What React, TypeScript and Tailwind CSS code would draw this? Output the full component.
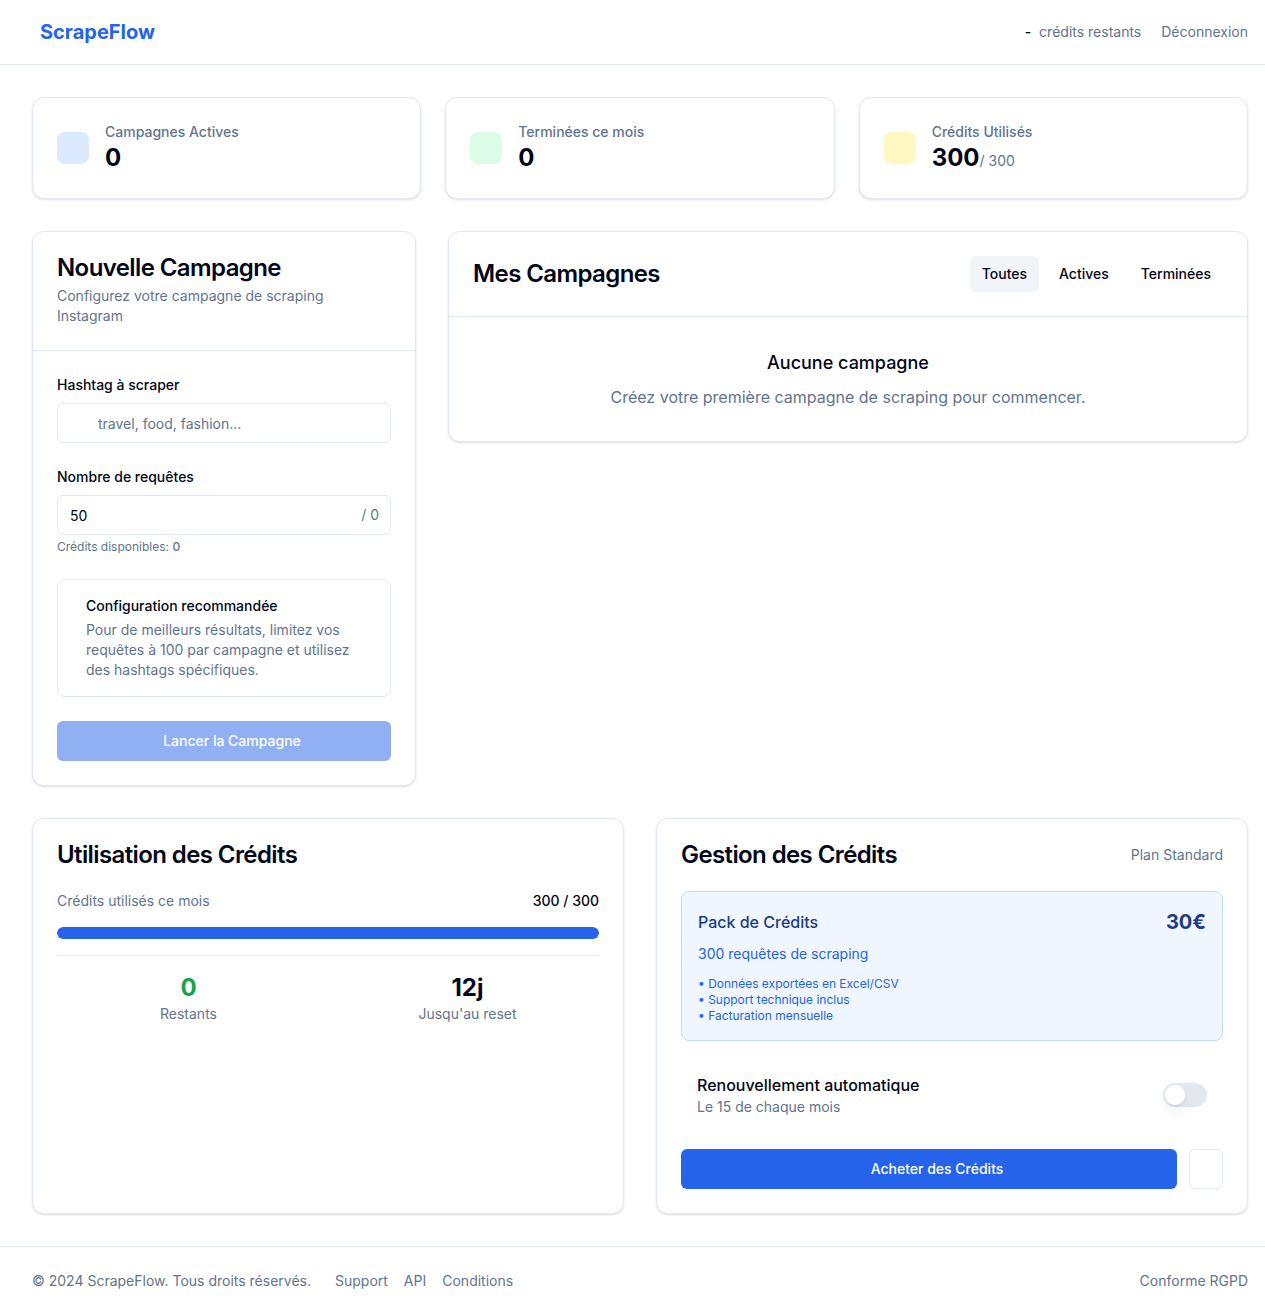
const StatCard = ({
  label,
  value,
  suffix,
  tone,
}: {
  label: string
  value: string
  suffix?: string
  tone: string
}) => (
  <div className="rounded-xl border border-slate-200 bg-white p-6 shadow-sm">
    <div className="flex items-center">
      <div className={`h-8 w-8 rounded-lg ${tone}`} />
      <div className="ml-4">
        <p className="text-sm font-medium leading-5 text-slate-500">{label}</p>
        <p className="text-2xl font-bold leading-8 text-slate-950">
          {value}
          {suffix && <span className="text-sm font-normal text-slate-500">{suffix}</span>}
        </p>
      </div>
    </div>
  </div>
)

const App = () => {
  return (
    <div className="min-h-screen bg-white font-['Inter','Liberation_Sans',sans-serif] text-slate-950">
      <header className="border-b border-slate-200 bg-white">
        <div className="flex h-16 items-center justify-between pl-8 pr-[17px]">
          <span className="ml-2 text-xl font-bold text-[#2563eb]">ScrapeFlow</span>
          <div className="flex items-center gap-5 text-sm">
            <div className="flex items-center gap-2">
              <span className="font-medium text-slate-950">-</span>
              <span className="text-slate-500">crédits restants</span>
            </div>
            <button className="text-slate-500">Déconnexion</button>
          </div>
        </div>
      </header>

      <main className="pl-8 pr-[17px] pt-8 pb-8">
        <div className="grid grid-cols-3 gap-6">
          <StatCard label="Campagnes Actives" value="0" tone="bg-[#dbeafe]" />
          <StatCard label="Terminées ce mois" value="0" tone="bg-[#dcfce7]" />
          <StatCard label="Crédits Utilisés" value="300" suffix="/ 300" tone="bg-[#fef9c3]" />
        </div>

        <div className="mt-8 grid grid-cols-3 items-start gap-8">
          {/* new campaign form */}
          <div className="rounded-xl border border-slate-200 bg-white shadow-sm">
            <div className="flex flex-col space-y-1.5 border-b border-slate-200 p-6">
              <h2 className="text-2xl font-semibold leading-none tracking-tight">Nouvelle Campagne</h2>
              <p className="text-sm text-slate-500">Configurez votre campagne de scraping Instagram</p>
            </div>
            <div className="space-y-6 p-6">
              <div className="space-y-2">
                <label className="block text-sm font-medium leading-5">Hashtag à scraper</label>
                <input
                  className="h-10 w-full rounded-md border border-slate-200 bg-white pl-10 pr-3 text-sm placeholder:text-slate-500"
                  placeholder="travel, food, fashion..."
                />
              </div>
              <div>
                <label className="block text-sm font-medium leading-5">Nombre de requêtes</label>
                <div className="relative mt-2">
                  <input
                    className="h-10 w-full rounded-md border border-slate-200 bg-white px-3 text-sm"
                    defaultValue="50"
                  />
                  <span className="absolute right-3 top-1/2 -translate-y-1/2 text-sm text-slate-500">/ 0</span>
                </div>
                <p className="mt-1 text-xs leading-4 text-slate-500">
                  Crédits disponibles: <span className="font-medium">0</span>
                </p>
              </div>
              <div className="rounded-lg border border-slate-200 px-7 py-4">
                <h4 className="text-sm font-medium leading-5">Configuration recommandée</h4>
                <p className="mt-1 text-sm leading-5 text-slate-500">
                  Pour de meilleurs résultats, limitez vos requêtes à 100 par campagne et utilisez des hashtags spécifiques.
                </p>
              </div>
              <button
                disabled
                className="flex h-10 w-full items-center justify-center rounded-md bg-[#2563eb] text-sm font-medium text-white opacity-50"
              >
                <span className="h-4 w-4" />
                Lancer la Campagne
              </button>
            </div>
          </div>

          {/* campaigns list */}
          <div className="col-span-2 rounded-xl border border-slate-200 bg-white shadow-sm">
            <div className="flex items-center justify-between border-b border-slate-200 p-6">
              <h2 className="text-2xl font-semibold leading-none tracking-tight">Mes Campagnes</h2>
              <div className="flex items-center gap-2">
                <button className="h-9 rounded-md bg-slate-100 px-3 text-sm font-medium">Toutes</button>
                <button className="h-9 rounded-md px-3 text-sm font-medium">Actives</button>
                <button className="h-9 rounded-md px-3 text-sm font-medium">Terminées</button>
              </div>
            </div>
            <div className="p-6">
              <div className="py-2 text-center">
                <h3 className="text-lg font-medium leading-7">Aucune campagne</h3>
                <p className="mt-2 text-base leading-6 text-slate-500">
                  Créez votre première campagne de scraping pour commencer.
                </p>
              </div>
            </div>
          </div>
        </div>

        <div className="mt-8 grid grid-cols-2 gap-8">
          {/* usage */}
          <div className="rounded-xl border border-slate-200 bg-white shadow-sm">
            <div className="p-6">
              <h2 className="text-2xl font-semibold leading-none tracking-tight">Utilisation des Crédits</h2>
            </div>
            <div className="px-6 pb-6">
              <div className="flex items-center justify-between text-sm leading-5">
                <span className="text-slate-500">Crédits utilisés ce mois</span>
                <span className="font-medium">300 / 300</span>
              </div>
              <div className="mt-4 h-3 w-full overflow-hidden rounded-full bg-slate-200">
                <div className="h-full rounded-full bg-[#2563eb]" style={{ width: "100%" }} />
              </div>
              <div className="mt-4 grid grid-cols-2 gap-4 border-t border-slate-200 pt-4 text-center">
                <div>
                  <p className="text-2xl font-bold leading-8 text-[#16a34a]">0</p>
                  <p className="text-sm leading-5 text-slate-500">Restants</p>
                </div>
                <div>
                  <p className="text-2xl font-bold leading-8">12j</p>
                  <p className="text-sm leading-5 text-slate-500">Jusqu'au reset</p>
                </div>
              </div>
            </div>
          </div>

          {/* credits management */}
          <div className="rounded-xl border border-slate-200 bg-white shadow-sm">
            <div className="flex items-center justify-between p-6">
              <h2 className="text-2xl font-semibold leading-none tracking-tight">Gestion des Crédits</h2>
              <span className="text-sm text-slate-500">Plan Standard</span>
            </div>
            <div className="space-y-4 px-6 pb-6">
              <div className="rounded-lg border border-[#bfdbfe] bg-[#eff6ff] p-4">
                <div className="flex items-center justify-between">
                  <h3 className="text-base font-medium leading-7 text-[#1e3a8a]">Pack de Crédits</h3>
                  <span className="text-xl font-bold leading-7 text-[#1e3a8a]">30€</span>
                </div>
                <p className="mt-2 text-sm leading-5 text-[#2563eb]">300 requêtes de scraping</p>
                <ul className="mt-3 text-xs leading-4 text-[#2563eb]">
                  <li>• Données exportées en Excel/CSV</li>
                  <li>• Support technique inclus</li>
                  <li>• Facturation mensuelle</li>
                </ul>
              </div>
              <div className="flex items-center justify-between p-4">
                <div>
                  <p className="text-base font-medium leading-6">Renouvellement automatique</p>
                  <p className="text-sm leading-5 text-slate-500">Le 15 de chaque mois</p>
                </div>
                <button className="flex h-6 w-11 items-center rounded-full bg-slate-200 px-0.5">
                  <span className="h-5 w-5 rounded-full bg-white shadow-lg" />
                </button>
              </div>
              <div className="flex gap-3">
                <button className="flex h-10 flex-1 items-center justify-center rounded-md bg-[#2563eb] text-sm font-medium text-white">
                  <span className="h-4 w-4" />
                  Acheter des Crédits
                </button>
                <button className="h-10 rounded-md border border-slate-200 bg-white px-4" />
              </div>
            </div>
          </div>
        </div>
      </main>

      <footer className="border-t border-slate-200">
        <div className="flex items-center justify-between py-6 pl-8 pr-[17px] text-sm leading-5 text-slate-500">
          <div className="flex items-center">
            <span>© 2024 ScrapeFlow. Tous droits réservés.</span>
            <div className="ml-6 flex items-center gap-4">
              <a>Support</a>
              <a>API</a>
              <a>Conditions</a>
            </div>
          </div>
          <span>Conforme RGPD</span>
        </div>
      </footer>
    </div>
  )
}

export default App
